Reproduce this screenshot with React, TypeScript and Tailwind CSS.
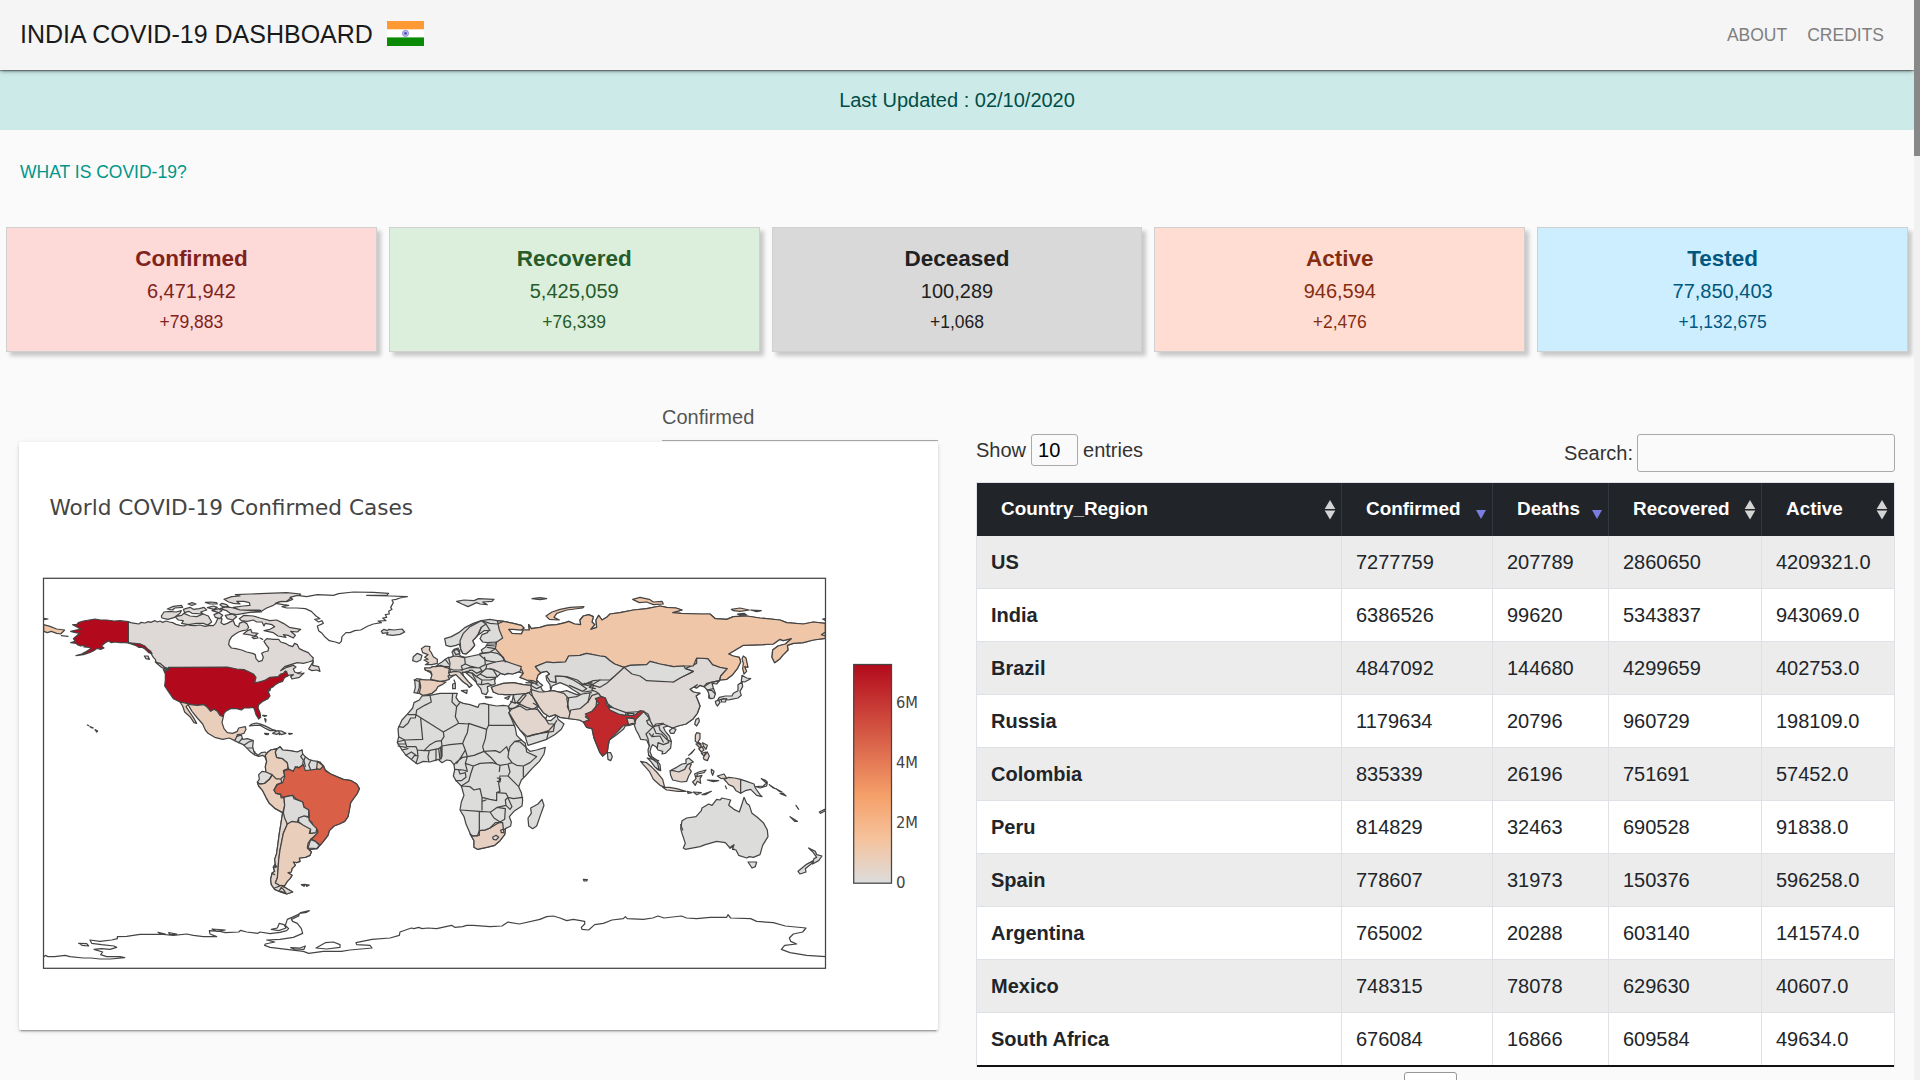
import React from "react";

const stats = [
  { label: "Confirmed", total: "6,471,942", delta: "+79,883", tone: "bg-[#fdd9d7] text-[#7f231c]" },
  { label: "Recovered", total: "5,425,059", delta: "+76,339", tone: "bg-[#dbefdc] text-[#285b2a]" },
  { label: "Deceased", total: "100,289", delta: "+1,068", tone: "bg-[#d9d9d9] text-[#212121]" },
  { label: "Active", total: "946,594", delta: "+2,476", tone: "bg-[#ffddd3] text-[#852d12]" },
  { label: "Tested", total: "77,850,403", delta: "+1,132,675", tone: "bg-[#cdeefe] text-[#02577e]" },
];

const rows = [
  ["US", "7277759", "207789", "2860650", "4209321.0"],
  ["India", "6386526", "99620", "5343837", "943069.0"],
  ["Brazil", "4847092", "144680", "4299659", "402753.0"],
  ["Russia", "1179634", "20796", "960729", "198109.0"],
  ["Colombia", "835339", "26196", "751691", "57452.0"],
  ["Peru", "814829", "32463", "690528", "91838.0"],
  ["Spain", "778607", "31973", "150376", "596258.0"],
  ["Argentina", "765002", "20288", "603140", "141574.0"],
  ["Mexico", "748315", "78078", "629630", "40607.0"],
  ["South Africa", "676084", "16866", "609584", "49634.0"],
];

const columns = [
  { name: "Country_Region", sorted: false },
  { name: "Confirmed", sorted: true },
  { name: "Deaths", sorted: true },
  { name: "Recovered", sorted: false },
  { name: "Active", sorted: false },
];

type Shape = { d: string; fill: string };

const GRAY = "#dcdcdb";
const PALE = "#ded9d6";
const SAND = "#e3d5cb";
const PEACH = "#eacebc";
const RUS = "#f0c6a8";
const RED = "#b20a1c";

/* North America and the Caribbean */
const northAmerica: Shape[] = [
  { fill: PALE, d: "M265 155L272 158 285 160 297 162 303 157 315 159 325 155 332 157 345 152 352 156 360 153 368 157 378 153 388 156 398 158 408 163 420 166 432 168 442 163 452 166 465 167 480 165 495 169 508 166 520 167 527 160 533 146 540 140 546 147 543 158 552 164 562 160 572 155 580 152 585 165 596 171 598 160 610 155 620 160 626 172 620 180 608 182 596 186 586 192 575 200 568 212 566 224 574 234 588 236 605 240 620 246 638 250 646 254 648 266 656 275 666 272 670 262 665 250 672 246 684 243 686 234 678 224 672 214 680 206 700 208 716 208 722 216 736 220 746 226 758 230 764 220 772 224 778 236 790 242 805 248 812 256 820 264 818 272 806 276 790 280 772 278 752 284 734 290 722 302 740 292 760 286 768 291 760 297 764 306 780 312 792 309 778 322 756 327 752 320 760 314 744 316 720 330 640 350 500 330 385 296 372 292 358 284 348 276 346 268 340 262 334 252 325 240 312 228 300 222 285 222 265 218Z" },
  { fill: RED, d: "M265 155L240 152 222 153 200 150 182 150 165 147 148 150 130 153 115 158 110 164 98 164 112 172 122 178 108 180 92 184 106 188 120 190 112 196 100 206 106 214 92 218 108 220 112 224 122 228 134 226 132 231 148 232 152 236 140 244 125 252 108 257 130 254 148 248 160 243 172 235 182 238 192 234 184 228 196 218 206 213 214 218 225 216 240 218 255 218 265 219Z" },
  { fill: RED, d: "M265 219L285 220 300 222 314 228 324 238 332 244 336 251 326 248 316 238 306 232 296 232 286 226Z" },
  { fill: RED, d: "M385 292L562 291 590 297 612 299 628 306 640 312 648 322 644 338 656 336 672 332 690 322 714 320 722 312 730 310 736 303 740 305 744 318 734 322 728 334 716 338 706 344 700 350 692 354 690 362 686 358 686 368 690 378 684 386 668 394 656 404 654 414 660 428 662 442 656 447 648 434 644 420 640 412 628 414 612 414 604 420 590 416 572 416 560 422 552 430 550 440 540 436 532 424 522 418 512 424 502 412 492 404 472 406 452 404 440 400 420 396 400 386 386 366 374 348 376 330 376 312 370 298 382 303 386 298Z" },
  { fill: PEACH, d: "M420 396L440 400 452 404 472 406 492 404 502 412 512 424 522 418 532 424 540 436 550 440 546 458 552 476 562 488 578 490 592 484 596 474 616 470 618 478 612 490 604 492 592 494 590 504 584 512 568 504 548 508 524 502 504 490 496 480 488 462 472 444 456 424 444 404 438 410 450 428 460 442 470 460 462 458 450 440 434 426 428 408Z" },
  { fill: GRAY, d: "M584 512L590 500 604 494 608 508 622 506 640 512 638 530 642 546 654 556 664 548 676 546 682 554 676 562 668 556 656 559 644 555 632 546 622 536 610 524 596 518Z" },
  { fill: "none", d: "M606 506L596 518M612 526L626 516 638 512M622 534L638 534M644 544L644 553" },
  { fill: GRAY, d: "M628 468L636 462 650 459 664 463 680 470 696 478 708 482 690 482 674 474 660 466 644 466ZM698 490L712 482 724 483 738 490 724 494 718 489 710 493ZM674 490L686 491 684 494 676 493ZM746 490L757 491 748 493ZM668 436L680 437 674 439ZM674 446L678 448 677 456ZM717 483L718 494" },
  { fill: RED, d: "M142 465L146 467ZM150 470L160 474 156 474ZM165 479L173 483 170 486ZM64 197L84 199Z" },
  { fill: RUS, d: "M11 164L30 169 50 177 74 180 62 192 50 190 34 184 22 188 11 184ZM11 145L24 147 11 149" },
  { fill: PALE, d: "M405 140L425 136 432 130 450 138 470 140 490 132 505 138 515 156 503 165 490 160 470 160 445 164 425 160 430 152 415 150ZM364 138L372 126 390 124 408 126 424 122 420 130 414 134 404 142 384 148 366 144ZM382 117L400 109 424 106 428 112 404 114 398 120ZM430 118L450 112 460 118 478 116 492 112 500 120 482 126 490 132 456 130 446 124 434 128ZM444 102L456 98 468 102 456 106ZM496 97L512 96 530 98 532 102 510 102ZM502 113L520 108 532 112 522 118ZM516 122L536 116 546 122 536 128ZM522 134L536 128 548 136 540 146 526 142ZM556 136L578 132 590 140 578 150 562 146Z" },
  { fill: PALE, d: "M552 88L575 80 600 78 586 74 630 72 680 70 740 68 782 72 776 78 750 86 740 94 716 96 700 106 680 114 664 124 640 122 600 120 580 112 610 108 630 106 628 98 612 94 590 94 600 102 580 100 566 96ZM540 116L560 110 580 114 600 120 660 120 664 126 630 127 590 134 570 130 560 122ZM546 100L560 104 568 112 548 110 540 104Z" },
  { fill: PALE, d: "M598 146L612 136 640 138 660 144 690 152 710 150 730 160 748 172 782 178 772 186 752 184 766 196 760 204 744 196 730 194 738 202 714 198 700 188 672 182 690 178 704 170 696 164 676 160 672 168 666 156 650 156 640 150 622 154 604 152ZM610 192L622 182 632 178 636 188 654 190 644 198 626 194ZM636 202L650 198 654 204 642 206ZM660 204L668 208Z" },
  { fill: PALE, d: "M806 297L814 284 820 272 818 286 836 290 840 304 830 300 816 302ZM346 276L360 280 372 290 384 300 366 293ZM313 258L324 258 328 268 318 266ZM772 309L784 306Z" },
];

/* Greenland, Iceland and South America */
const southAmerica: Shape[] = [
  { fill: "#fff", d: "M106 100L124 94 140 95 158 88 150 82 172 76 200 80 232 74 280 76 296 71 340 66 400 67 446 70 440 76 380 76 450 78 502 80 480 84 468 88 456 90 460 98 452 112 456 118 446 124 448 132 436 134 440 142 428 144 438 152 414 153 424 158 400 162 384 168 362 180 344 182 330 188 318 188 306 200 304 214 298 220 286 216 268 212 256 202 246 190 236 182 232 168 250 160 246 152 236 156 224 148 240 146 228 138 214 124 196 116 170 114 140 114 126 110 146 106 130 104Z" },
  { fill: GRAY, d: "M424 184L432 178 442 182 446 178 462 180 486 177 494 186 480 193 458 196 440 194 444 188 428 190Z" },
  { fill: GRAY, d: "M76 556L84 546 92 540 112 536 120 530 128 540 150 542 172 546 186 540 188 552 196 560 206 568 218 572 232 574 240 576 250 588 256 600 272 612 290 620 310 628 334 632 350 642 358 656 352 670 342 684 332 698 328 720 324 740 314 754 298 762 282 768 268 782 264 796 250 814 240 826 232 836 216 838 206 836 214 846 210 856 196 862 178 864 180 874 170 878 160 876 166 886 156 896 154 906 144 908 156 916 150 926 142 934 136 942 132 950 144 958 158 966 140 972 122 966 104 958 94 944 92 928 96 910 104 904 100 892 106 884 104 868 110 850 114 820 118 790 122 766 126 740 128 728 106 716 88 700 78 682 68 662 56 648 52 636 58 628 56 614 66 604 78 606 76 590 80 574 76 564Z" },
  { fill: SAND, d: "M128 728L132 730 142 762 136 776 130 790 126 810 120 840 116 870 114 900 112 924 106 938 118 946 134 944 132 950 144 958 158 966 140 972 122 966 104 958 94 944 92 928 96 910 104 904 100 892 106 884 104 868 110 850 114 820 118 790 122 766 126 740Z" },
  { fill: PEACH, d: "M142 762L152 754 172 756 190 764 212 776 208 790 224 788 230 780 234 790 224 798 212 808 204 820 202 834 214 846 210 856 196 862 178 864 180 874 170 878 160 876 166 886 156 896 154 906 144 908 156 916 150 926 142 934 134 947 118 946 106 938 112 924 114 900 116 870 120 840 126 810 130 790 138 772Z" },
  { fill: PEACH, d: "M52 636L60 642 74 640 88 628 98 614 108 626 122 626 126 638 110 644 102 660 108 670 122 674 124 684 132 682 134 706 130 722 128 728 106 716 88 700 78 682 68 662 56 648Z" },
  { fill: PEACH, d: "M76 556L84 546 92 540 112 536 106 546 110 562 128 566 142 578 144 596 130 602 134 616 122 627 108 626 96 614 78 606 76 590 80 574Z" },
  { fill: GRAY, d: "M112 536L120 530 128 540 150 542 172 546 186 540 188 552 182 560 190 570 188 584 176 594 172 590 160 604 146 600 142 578 128 566 110 562 106 546Z" },
  { fill: "#d95f47", d: "M132 602L148 598 160 604 166 590 176 594 190 584 196 602 210 600 226 598 240 596 250 586 256 602 272 612 290 620 310 628 334 632 350 642 358 656 352 670 342 684 332 698 328 720 324 740 314 754 298 762 282 768 268 782 264 796 250 814 240 826 226 814 214 808 226 796 234 786 230 776 220 770 216 758 206 748 208 738 206 720 192 712 188 696 170 688 158 676 138 680 124 682 122 672 108 670 102 660 112 644 128 638 134 620Z" },
  { fill: "#dddbd9", d: "M132 682L138 680 158 676 162 686 188 696 192 712 206 720 206 740 192 738 176 744 172 756 156 754 142 762 134 744 130 728 134 706Z" },
  { fill: GRAY, d: "M176 744L192 738 206 742 208 752 220 766 230 776 228 788 210 790 212 778 190 766 176 756ZM212 808L226 814 238 826 230 836 204 834Z" },
  { fill: PEACH, d: "M232 574L250 588 240 598 230 596Z" },
  { fill: "none", d: "M212 572L206 584 212 600M196 560L192 572 196 590M96 614L88 628 74 640 60 642M184 944L196 943 192 949ZM198 944L208 945 200 949ZM100 888L110 888M104 884L110 890 102 894M96 910L104 914M104 954L124 946 132 952" },
  { fill: GRAY, d: "M124 952L118 962 138 970 130 958Z" },
];

/* Europe, Africa and Asia */
const eurasia: Shape[] = [
  { fill: GRAY, d: "M102 368L106 352 104 330 110 326 138 330 152 330 156 318 152 308 136 300 134 294 150 294 158 290 168 290 176 282 186 276 196 268 206 262 214 262 220 256 216 246 222 238 234 234 240 244 234 250 242 258 256 262 276 258 296 254 308 250 304 240 316 232 322 222 346 222 350 216 322 218 308 216 300 206 306 194 322 188 326 182 312 182 296 194 286 204 278 212 284 226 272 240 258 252 248 250 242 236 238 222 228 226 212 230 198 226 194 206 214 200 236 188 256 172 280 160 304 152 330 148 352 152 370 154 400 160 424 166 432 174 424 180 400 178 386 178 396 190 424 192 430 180 448 180 446 164 454 176 480 172 500 166 530 164 556 158 566 154 584 162 602 164 600 150 610 138 626 134 640 140 636 156 644 164 632 178 650 172 648 150 656 136 666 150 680 142 690 132 720 128 760 120 800 116 840 108 860 112 888 114 906 120 878 128 904 130 960 132 990 132 1006 146 1040 148 1060 140 1100 138 1140 144 1200 150 1220 158 1270 162 1300 156 1336 160 1336 205 1300 210 1270 218 1240 220 1222 226 1224 240 1208 256 1200 266 1184 278 1176 262 1178 240 1194 228 1216 222 1234 206 1210 212 1200 208 1180 222 1150 224 1090 226 1070 238 1046 252 1060 258 1078 262 1082 276 1072 296 1056 316 1040 328 1020 330 1010 342 996 340 1000 354 1006 370 996 386 986 384 988 370 982 360 972 350 960 346 950 354 944 352 952 344 940 352 930 358 940 366 960 370 948 378 954 392 960 408 952 430 938 448 918 462 894 468 878 474 864 468 850 472 856 484 868 498 874 514 872 534 856 550 846 552 848 544 834 540 828 530 818 524 814 530 810 545 816 560 830 570 840 584 842 602 832 598 820 584 816 568 806 556 804 540 808 528 800 510 782 508 776 494 768 480 762 462 748 466 736 468 730 478 710 494 688 510 684 530 682 546 668 558 660 548 650 524 642 504 636 476 620 472 610 456 598 450 572 446 540 442 526 434 508 440 490 428 478 412 468 408 474 420 488 438 496 446 500 440 496 450 512 452 526 440 530 432 534 448 552 462 544 478 524 494 500 508 470 518 444 526 440 514 436 500 420 480 406 460 390 436 386 426 388 416 386 408 396 394 400 378 402 374 390 374 374 374 354 372 340 366 334 352 344 348 370 340 400 338 430 344 452 346 456 340 440 330 432 326 420 322 430 310 416 306 398 312 384 310 374 314 362 310 352 320 346 322 344 334 346 342 334 346 322 350 324 364 318 374 306 370 302 356 292 344 288 336 276 324 258 308 246 306 252 320 264 334 276 346 268 352 262 344 250 336 236 322 228 312 210 324 196 330 186 336 174 346 168 360 156 370 142 374 128 376 118 370Z" },
  { fill: PALE, d: "M640 346L660 352 680 340 704 318 732 292 740 290 760 308 800 316 840 328 880 336 900 324 940 304 916 296 950 280 950 264 984 266 998 284 1042 296 1022 318 1018 332 980 340 972 350 960 346 950 354 944 352 952 344 940 352 930 358 940 366 960 370 948 378 954 392 960 408 952 430 938 448 918 462 894 468 878 474 864 468 850 462 836 466 820 470 804 440 790 424 760 426 730 428 700 414 684 402 676 384 664 380 650 366 636 360Z" },
  { fill: RUS, d: "M352 152L370 154 400 160 424 166 432 174 424 180 400 178 386 178 396 190 424 192 430 180 448 180 446 164 454 176 480 172 500 166 530 164 556 158 566 154 584 162 602 164 600 150 610 138 626 134 640 140 636 156 644 164 632 178 650 172 648 150 656 136 666 150 680 142 690 132 720 128 760 120 800 116 840 108 860 112 888 114 906 120 878 128 904 130 960 132 990 132 1006 146 1040 148 1060 140 1100 138 1140 144 1200 150 1220 158 1270 162 1300 156 1336 160 1336 186 1324 194 1336 198 1336 205 1300 210 1270 218 1240 220 1222 226 1224 240 1208 256 1200 266 1184 278 1176 262 1178 240 1194 228 1216 222 1234 206 1210 212 1200 208 1180 222 1150 224 1090 226 1070 238 1046 252 1060 258 1078 262 1082 276 1072 296 1056 316 1040 328 1020 330 1022 318 1042 296 1020 292 998 284 984 266 950 264 940 288 912 288 880 290 840 282 810 274 800 284 750 286 732 292 704 282 690 272 676 260 660 258 620 250 600 256 566 258 556 276 520 278 500 276 466 290 474 300 482 308 474 316 470 330 472 338 458 332 440 330 420 322 430 310 424 298 400 284 376 276 364 256 346 236 350 216 368 204 358 180Z" },
  { fill: "#dcdad8", d: "M466 290L500 276 520 278 556 276 566 258 600 256 620 250 660 258 676 260 690 272 704 282 732 292 704 318 690 330 660 330 640 332 610 344 592 330 560 320 526 318 528 338 510 334 500 318 508 312 500 304 482 308 474 300Z" },
  { fill: GRAY, d: "M732 292L750 286 800 284 810 274 840 282 880 290 912 288 916 296 940 304 900 324 880 336 840 334 800 332 780 318 756 312Z" },
  { fill: "#fff", d: "M470 330L474 316 484 308 500 304 508 312 498 318 500 330 510 344 512 360 500 368 488 362 482 350 488 346 478 338ZM512 362L516 348 540 338 560 346 580 360 600 372 590 374 560 362 540 366Z" },
  { fill: PEACH, d: "M118 328L138 330 152 330 180 334 198 336 186 344 174 350 168 360 156 370 142 374 128 376 118 370 122 350Z" },
  { fill: "#e6d1c3", d: "M134 294L150 294 158 290 168 290 182 286 196 292 210 296 212 314 204 318 208 328 196 332 180 334 152 328 156 314 152 304 136 300Z" },
  { fill: "#e0d7d0", d: "M206 264L224 258 240 260 254 264 256 282 244 288 248 300 220 300 208 296 210 280Z" },
  { fill: "#e2d7cf", d: "M206 308L224 304 240 306 252 320 264 334 276 346 268 352 262 344 250 336 236 322 228 314 210 318ZM244 362L262 360 260 370Z" },
  { fill: PALE, d: "M318 296L320 284 346 276 372 272 400 282 424 290 420 304 398 312 384 310 374 314 362 310 352 304 340 298Z" },
  { fill: "#ded9d6", d: "M304 152L318 162 304 172 296 190 286 204 278 212 284 226 272 240 258 252 248 250 242 236 240 212 250 190 270 170Z" },
  { fill: SAND, d: "M334 352L344 348 370 340 400 338 430 344 452 346 456 364 440 370 402 374 374 374 354 372 340 366Z" },
  { fill: SAND, d: "M452 358L478 366 490 366 520 362 552 370 566 386 562 410 572 432 566 446 540 442 526 434 508 440 490 428 478 412 468 394 458 380Z" },
  { fill: "#e1d5cd", d: "M386 426L394 418 402 414 420 408 440 420 462 416 474 420 488 438 496 446 506 462 524 462 520 484 480 490 460 494 442 500 420 480 406 460ZM428 376L446 368 458 380 474 408 460 418 440 412 410 398Z" },
  { fill: "#e2d6ce", d: "M566 446L572 420 600 416 624 396 636 376 656 370 664 384 650 392 648 410 636 424 616 440 628 450 610 456 598 450Z" },
  { fill: "#c0282b", d: "M646 386L664 380 676 384 680 404 700 416 684 406 690 420 716 432 740 436 744 428 750 434 764 436 780 422 792 424 780 436 768 448 764 460 758 444 742 444 744 464 728 468 710 488 688 510 684 530 682 546 668 558 660 548 650 524 642 504 636 476 620 472 610 456 628 450 616 432 636 424 648 410 656 400Z" },
  { fill: GRAY, d: "M684 410L700 414 738 428 736 436 716 432 690 420ZM742 430L762 430 760 436 746 436Z" },
  { fill: SAND, d: "M740 444L762 446 766 462 758 460 746 464Z" },
  { fill: GRAY, d: "M682 548L692 548 697 560 692 572 684 568Z" },
  { fill: "none", d: "M304 152L330 160 352 162 370 154M318 162L330 182M296 190L304 172M308 250L330 246 346 236M322 232L346 236M300 256L320 272 346 276M330 246L352 250 370 262 376 276M256 282L270 288 296 294 316 284 314 262M244 300L270 292 300 294 306 302 290 310 276 300 250 308M318 296L300 312 320 322 346 322M276 308L290 320 306 330 304 344 294 342M300 312L288 320M306 330L330 330 346 326M306 344L324 340 334 346M258 304L276 310 290 336M330 296L340 300 352 320M270 300L260 310M208 296L206 308M168 288L206 290M196 268L206 282M438 338L470 340M452 346L470 356 482 350M452 334L474 346M400 378L406 398 420 398 438 376M388 416L404 414 420 402M392 394L406 400M442 500L480 490 506 482 524 462 530 452M500 508L506 484M526 318L528 338M530 318L556 320 580 330 600 342 620 356 608 364 590 356 568 346M600 342L630 348 660 330M612 340L640 344 628 352 646 356M610 344L636 338M612 366L640 362M560 384L590 380 606 372 634 368M630 370L624 396M566 416L560 384M460 400L474 408" },
  { fill: "none", d: "M790 424L804 432 810 448 800 452 804 462 818 472M820 470L828 490 844 492 860 508 872 514M808 528L804 506 798 492 818 472 828 462 850 460M836 466L840 480 860 500 866 518 850 524 834 518 832 534M808 490L816 500 820 492M816 500L840 498 850 516M806 556L822 566M816 568L836 572M972 350L990 338 1018 332M982 360L1000 356" },
  { fill: GRAY, d: "M802 564L818 568 832 578 838 600 824 590 812 574Z" },
  { fill: "#e4d4ca", d: "M132 270L144 268 134 262 144 254 128 248 124 236 136 228 150 230 148 240 154 248 160 260 172 268 172 280 156 284 136 284 146 278Z" },
  { fill: GRAY, d: "M98 272L100 260 112 250 126 256 122 270 110 276ZM218 342L226 340 226 356 218 356ZM222 330L226 340ZM316 380L336 382 318 384ZM374 384L390 378 384 388ZM220 242L232 238 240 250 228 254Z" },
  { fill: "none", d: "M102 330L118 334 118 352 112 370M322 226L344 228M300 250L328 248" },
  { fill: GRAY, d: "M230 94L252 90 282 92 296 86 342 88 336 94 308 96 322 104 300 102 290 98 264 110 246 102ZM456 86L480 83 500 86 480 89Z" },
  { fill: RUS, d: "M498 138L516 126 540 118 570 112 612 110 608 114 560 120 530 130 522 142 538 150 508 148ZM758 88L780 82 808 88 820 96 846 94 850 102 820 104 800 96 778 98Z" },
  { fill: GRAY, d: "M126 378L150 376 180 370 212 370 232 370 228 382 236 394 250 400 270 404 294 412 298 402 312 400 326 404 350 408 370 406 384 408 390 424 386 428 396 450 406 474 410 496 424 510 436 520 438 532 450 544 470 540 496 532 492 552 478 574 456 596 436 618 424 630 416 650 424 668 428 690 426 708 404 722 388 740 394 756 392 768 376 776 374 794 360 812 344 826 320 832 292 838 282 832 282 812 270 790 258 762 252 740 240 720 244 696 252 676 244 648 228 632 220 618 224 600 222 584 212 572 200 570 186 578 174 568 150 576 130 574 112 582 96 570 78 556 66 540 52 518 56 500 54 476 66 450 84 430 98 414 102 398 118 390Z" },
  { fill: "#e7d0c2", d: "M270 792L278 798 292 798 298 782 316 780 330 774 346 758 368 758 370 776 376 780 374 794 360 812 344 826 320 832 292 838 282 832 282 812Z" },
  { fill: GRAY, d: "M444 744L454 730 452 714 474 702 486 688 492 706 482 734 470 768 458 776 446 768ZM338 802L348 796 356 802 348 810 340 808ZM362 780L370 778 372 788 364 788Z" },
  { fill: "none", d: "M150 376L154 396 134 406 110 420 108 434 84 434M108 434L106 444 92 444 84 460 70 472 56 470M108 434L190 486 236 460 226 440 230 410 216 396 218 370M230 410L240 398M122 446L128 508 74 510 56 500M190 486L192 500 184 512 168 514 150 524 132 542 112 540 108 530 80 530 74 510M184 512L186 528 210 524 248 520 256 500 262 488 266 462 236 460M266 460L320 478M326 404L326 466 404 466M326 466L320 478 316 506 308 530 312 544 282 556 262 560 256 540 248 520M312 544L346 542 360 548 380 530 386 546 390 530 404 514 424 510M404 514L420 516 438 532 440 546 470 560 450 578 430 588 410 586 396 578 384 562 386 546M430 588L430 620M384 582L390 606 384 618 416 650M396 578L384 582 360 586 358 604M360 618L384 618M262 560L256 580 280 588 300 580 336 578 350 582 360 586M312 544L330 560 350 582M262 560L248 562 230 576 222 584M256 540L244 560 230 580M256 580L262 604 250 600 224 598M186 528L186 560 178 568M236 600L240 612 256 608 258 622 244 632 228 632M280 588L272 612 266 634 244 648M244 648L270 650 282 660 300 656 306 682 330 688 350 692 350 668 360 664 356 640 360 618M306 682L306 720M242 720L298 724 330 726M306 694L318 690M332 726L352 712 378 706 376 690 384 682 378 670 352 668M384 682L400 686 428 682M384 684L396 710 390 718 378 706M376 716L374 748 360 756 342 744 330 726M352 712L376 716M298 724L298 796 278 798M360 756L330 774 316 780 298 782M112 540L114 560 108 580M148 542L144 560 146 574M168 540L168 572M176 536L180 568M182 534L184 566M132 542L146 542 176 536 186 528M52 516L74 510M54 522L76 522M54 528L78 532M66 540L84 536M78 556L94 546 108 556M96 566L104 556 114 558M352 624L362 626 360 636 352 634" },
];

/* East Asia islands, Indonesia and Oceania */
const pacific: Shape[] = [
  { fill: GRAY, d: "M326 370L322 360 336 362 346 372 342 384 330 386Z" },
  { fill: GRAY, d: "M426 316L440 324 452 326 434 336 424 334ZM426 336L428 350 420 364 424 376 414 384 394 388 384 390 370 386 352 392 358 382 376 378 396 378 400 370 414 362 414 344ZM346 394L356 390 360 398 352 408 348 402ZM364 388L380 386 376 396 364 396Z" },
  { fill: RUS, d: "M430 258L438 264 444 292 434 290 440 304 432 312 428 296 430 280 426 266ZM394 118L420 114 448 120 420 124 400 122Z" },
  { fill: "#4a4a4a", d: "M452 120L484 122 470 125ZM412 132L432 130 440 135 420 136ZM668 147L676 146 676 151Z" },
  { fill: GRAY, d: "M284 462L288 448 296 444 298 454 290 468ZM208 482L218 474 228 478 222 490 212 490Z" },
  { fill: SAND, d: "M286 496L290 488 300 490 300 506 294 516 304 522 300 524 286 514ZM288 522L296 520 304 528 300 534ZM308 518L322 526 318 538 310 528ZM296 536L306 530 312 540 304 546ZM310 562L322 546 328 558 322 572 312 568ZM304 550L318 546 312 558ZM284 538L266 556 276 548Z" },
  { fill: SAND, d: "M122 574L140 578 156 592 170 606 188 628 194 652 180 646 160 628 148 604 130 584ZM188 652L208 652 230 656 258 664 234 664 200 660ZM262 664L276 668 264 670ZM280 666L304 668 290 674ZM306 674L334 664 316 674ZM210 602L224 602 240 596 254 590 260 580 274 582 268 596 274 604 266 618 260 634 244 636 218 630 212 616ZM284 612L296 606 318 600 312 608 292 612 290 620 306 616 300 626 302 640 292 634 286 646 278 636 288 626ZM334 598L342 604 338 616 334 606ZM322 630L356 632 340 635ZM352 618L372 612 380 624 364 626ZM376 648L380 656Z" },
  { fill: GRAY, d: "M214 600L230 592 246 582 258 580 258 568 266 564 280 576 262 584 254 598 236 606Z" },
  { fill: SAND, d: "M380 636L372 628 386 622 404 624 422 628 422 670 408 662 400 650 386 644Z" },
  { fill: GRAY, d: "M422 628L440 634 462 642 466 654 480 674 486 680 470 676 452 658 436 662 422 670ZM468 650L490 648 502 636 500 648 480 654ZM484 626L498 632 502 642ZM508 644L526 656 520 654ZM528 656L546 666 538 664ZM540 670L558 678 550 670ZM588 706L596 718ZM570 740L592 754 584 754ZM658 726L674 718 676 722 662 730Z" },
  { fill: GRAY, d: "M246 752L260 744 288 740 304 722 306 714 326 702 336 706 350 688 360 690 366 684 392 690 386 706 402 718 418 726 426 702 432 682 440 700 448 706 456 730 472 742 490 758 502 780 504 800 488 826 480 854 460 862 448 860 440 864 416 856 408 840 398 838 402 824 390 834 376 818 350 814 316 824 300 830 256 838 250 834 256 820 246 790 242 776Z" },
  { fill: "none", d: "M390 834L396 828 398 838 404 838M242 764L248 780" },
  { fill: GRAY, d: "M444 876L470 876 466 890 456 894Z" },
  { fill: GRAY, d: "M626 834L646 844 650 854 666 858 656 872 638 882 642 866 650 862 640 848ZM594 904L618 884 640 872 636 880 616 896 618 906 600 912Z" },
];

const antarcticaWest =
  "M10 292L16 286 24 290 44 290 75 286 90 290 130 294 152 294 180 297 212 297 254 293 240 290 200 290 182 284 188 276 162 268 184 266 210 268 230 262 222 258 185 254 155 250 150 240 180 244 215 240 232 236 232 230 260 229 300 223 370 223 400 226 440 222 460 226 490 230 530 230 510 222 508 212 540 214 556 218 596 216 602 211 620 216 654 220 660 216 690 221 720 217 740 212 746 206 736 196 742 178 756 172 774 164 782 158 808 152 800 157 778 160 776 168 754 178 758 184 772 190 784 206 788 220 760 232 720 238 680 240 704 246 676 252 674 256 690 262 740 268 790 274 806 280 850 274 904 274 930 270 996 264 990 256 950 254 948 248 996 238 1050 234 1078 226 1080 216 1114 204 1122 206 1136 202 1146 206 1164 204 1190 206 1235 196 1244 202 1268 200 1280 196 1300 196 1350 200 1386 198 1404 186 1438 192 1500 178M116 250L140 251 146 258 126 256ZM694 208L712 204 718 190 732 194 738 204 716 212ZM828 264L856 248 880 246 900 254 900 262 860 267ZM752 263L780 264 796 258 792 268 762 267ZM516 207L556 210 530 214ZM354 217L376 222 362 222ZM386 218L410 222 390 224Z";
const antarcticaEast =
  "M0 838L20 830 40 828 60 834 80 842 100 838 134 844 134 852 124 862 126 868 146 870 164 854 190 850 216 840 250 836 256 830 262 836 310 838 338 834 354 828 372 834 424 828 440 834 470 836 510 832 560 832 564 824 572 834 632 836 650 844 700 848 736 858 798 864 788 876 760 882 748 894 752 904 770 912 734 916 724 928 750 938 800 946 856 950M130 718L142 719 140 723 132 723Z";

function Shapes({ items, transform }: { items: Shape[]; transform: string }) {
  return (
    <g transform={transform}>
      {items.map((s, i) => (
        <path key={i} d={s.d} fill={s.fill} />
      ))}
    </g>
  );
}

function WorldMap() {
  return (
    <svg viewBox="19 442 919 588" className="block h-[588px] w-[919px]">
      <defs>
        <linearGradient id="scale" x1="0" y1="1" x2="0" y2="0">
          <stop offset="0" stopColor="rgb(220,220,220)" />
          <stop offset="0.2" stopColor="rgb(245,195,157)" />
          <stop offset="0.4" stopColor="rgb(245,160,105)" />
          <stop offset="1" stopColor="rgb(178,10,28)" />
        </linearGradient>
        <clipPath id="frame">
          <rect x="43" y="578" width="783" height="391" />
        </clipPath>
      </defs>
      <text x="49.5" y="514.6" fontSize="21.25" textLength="363.5" lengthAdjust="spacingAndGlyphs" fill="#444" fontFamily="'DejaVu Sans', sans-serif">
        World COVID-19 Confirmed Cases
      </text>
      <g clipPath="url(#frame)" stroke="#444" strokeWidth="3.7" strokeLinejoin="round" strokeLinecap="round">
        <Shapes items={northAmerica} transform="translate(40 570) scale(0.33333)" />
        <Shapes items={southAmerica} transform="translate(240 570) scale(0.33333)" />
        <Shapes items={eurasia} transform="translate(380 570) scale(0.33333)" />
        <Shapes items={pacific} transform="translate(600 570) scale(0.33333)" />
        <path d={antarcticaWest} fill="none" transform="translate(40 860) scale(0.33333)" />
        <path d={antarcticaEast} fill="none" transform="translate(540 640) scale(0.33333)" />
      </g>
      <rect x="43.5" y="578.3" width="782" height="390" fill="none" stroke="#444" strokeWidth="1.25" />
      <rect x="853.7" y="664.5" width="37.8" height="218.7" fill="url(#scale)" stroke="#444" strokeWidth="1.25" />
      <g fill="#444" fontSize="15" fontFamily="'DejaVu Sans', sans-serif">
        <text x="896" y="708" textLength="22" lengthAdjust="spacingAndGlyphs">6M</text>
        <text x="896" y="768" textLength="22" lengthAdjust="spacingAndGlyphs">4M</text>
        <text x="896" y="828" textLength="22" lengthAdjust="spacingAndGlyphs">2M</text>
        <text x="896" y="888">0</text>
      </g>
    </svg>
  );
}

function Flag() {
  return (
    <svg viewBox="0 0 37 25" className="mb-1 h-[25px] w-[37px]">
      <rect width="37" height="25" fill="#fff" />
      <rect width="37" height="8.3" fill="#ff9933" />
      <rect y="16.4" width="37" height="8.6" fill="#0b8a06" />
      <circle cx="18.5" cy="12.4" r="3.1" fill="#b9b9e6" stroke="#8f8fd2" strokeWidth="0.9" />
      <circle cx="18.5" cy="12.4" r="1.3" fill="#4a4ab8" />
    </svg>
  );
}

function SortIcon({ sorted }: { sorted: boolean }) {
  return (
    <svg viewBox="0 0 12 20" className="h-5 w-3 shrink-0">
      {sorted ? (
        <path d="M1 10h10L6 19z" fill="#7a7ee0" />
      ) : (
        <path d="M6 0l5.3 9H0.7zM0.7 10.4h10.6L6 19.4z" fill="#d4d4d4" />
      )}
    </svg>
  );
}

const grid = "grid grid-cols-[365px_151px_116px_153px_132px]";

export default function App() {
  return (
    <div className="flex h-[1080px] w-[1920px] overflow-hidden bg-[#fafafa] font-['Liberation_Sans',Arial,sans-serif] text-[#212529]">
      <div className="w-[1914px] shrink-0 overflow-hidden">
        <header className="relative flex h-[70px] items-center justify-between bg-[#f5f5f5] pr-[30px] pl-5 shadow-[0_2px_4px_-1px_rgba(0,0,0,0.5),0_1px_1px_rgba(0,0,0,0.3)]">
          <div className="flex items-center gap-[14px]">
            <h1 className="w-[353px] pb-[2px] text-[25px] leading-[34px] whitespace-nowrap text-[#1a1a1a]">INDIA COVID-19 DASHBOARD</h1>
            <Flag />
          </div>
          <nav className="flex gap-5 text-[17.5px] text-[#7f7f7f]">
            <span>ABOUT</span>
            <span>CREDITS</span>
          </nav>
        </header>
        <div className="flex h-[60px] items-center justify-center bg-[#cceae7] text-[20px] text-[#004e47]">
          Last Updated : 02/10/2020
        </div>
        <div className="h-[97px] pt-[30px] pl-5 text-[17.5px] leading-[24px] text-[#009688]">WHAT IS COVID-19?</div>

        <section className="grid grid-cols-5 gap-3 px-1.5">
          {stats.map((s) => (
            <div
              key={s.label}
              className={`flex h-[125px] flex-col items-center border border-[#d0d0d0] pt-[14px] shadow-[4px_4px_4px_rgba(0,0,0,0.2)] ${s.tone}`}
            >
              <div className="text-[22.5px] leading-[34px] font-bold">{s.label}</div>
              <div className="text-[20px] leading-[30px]">{s.total}</div>
              <div className="text-[17.5px] leading-[32px]">{s.delta}</div>
            </div>
          ))}
        </section>

        <main className="flex gap-[38px] pl-[19px]">
          <section className="w-[919px] pt-[40px]">
            <div className="ml-[643px] h-[49px] w-[276px] border-b border-[#a9a9a9] pt-[10px] text-[20px] leading-[30px] text-[#555]">
              Confirmed
            </div>
            <div className="mt-px h-[588px] rounded-[2px] bg-white shadow-[0_3px_1px_-2px_rgba(0,0,0,0.2),0_2px_2px_rgba(0,0,0,0.14),0_1px_5px_rgba(0,0,0,0.12)]">
              <WorldMap />
            </div>
          </section>

          <section className="w-[919px] pt-[82px]">
            <div className="flex h-12 items-start justify-between text-[20px] text-[#333]">
              <label className="flex h-8 items-center gap-[5px]">
                Show
                <span className="flex h-8 w-[47px] items-center rounded-[3px] border border-[#aaa] pl-[6px] text-black">10</span>
                <span>entries</span>
              </label>
              <label className="flex h-[38px] items-center gap-1">
                Search:
                <span className="h-[38px] w-[258px] rounded-[3px] border border-[#aaa]" />
              </label>
            </div>
            <div className="w-[919px] border-r border-l border-[#dee2e6]">
              <div className={`${grid} h-[54px] border-t border-[#dee2e6] bg-[#212529] text-[18.9px] font-bold text-white`}>
                {columns.map((c) => (
                  <div key={c.name} className="flex items-center justify-between border-r border-[#32383e] pr-[5px] pl-[24px] last:border-r-0 last:pr-[6px]">
                    <span>{c.name}</span>
                    <SortIcon sorted={c.sorted} />
                  </div>
                ))}
              </div>
              {rows.map((r) => (
                <div key={r[0]} className={`${grid} h-[53px] border-b border-[#dee2e6] text-[20px] last:h-[54px] last:border-b-2 last:border-[#111] odd:bg-white even:bg-[#ececec]`}>
                  {r.map((v, i) => (
                    <div key={i} className="flex items-center border-r border-[#dfe1e3] pb-px pl-[14px] first:font-bold last:border-r-0">
                      {v}
                    </div>
                  ))}
                </div>
              ))}
            </div>
            <div className="mt-[5px] ml-[428px] h-10 w-[53px] rounded-[3px] border border-[#979797] bg-white" />
          </section>
        </main>
      </div>
      <div className="w-1.5 shrink-0 bg-[#f1f1f1]">
        <div className="h-[156px] bg-[#888]" />
      </div>
    </div>
  );
}
